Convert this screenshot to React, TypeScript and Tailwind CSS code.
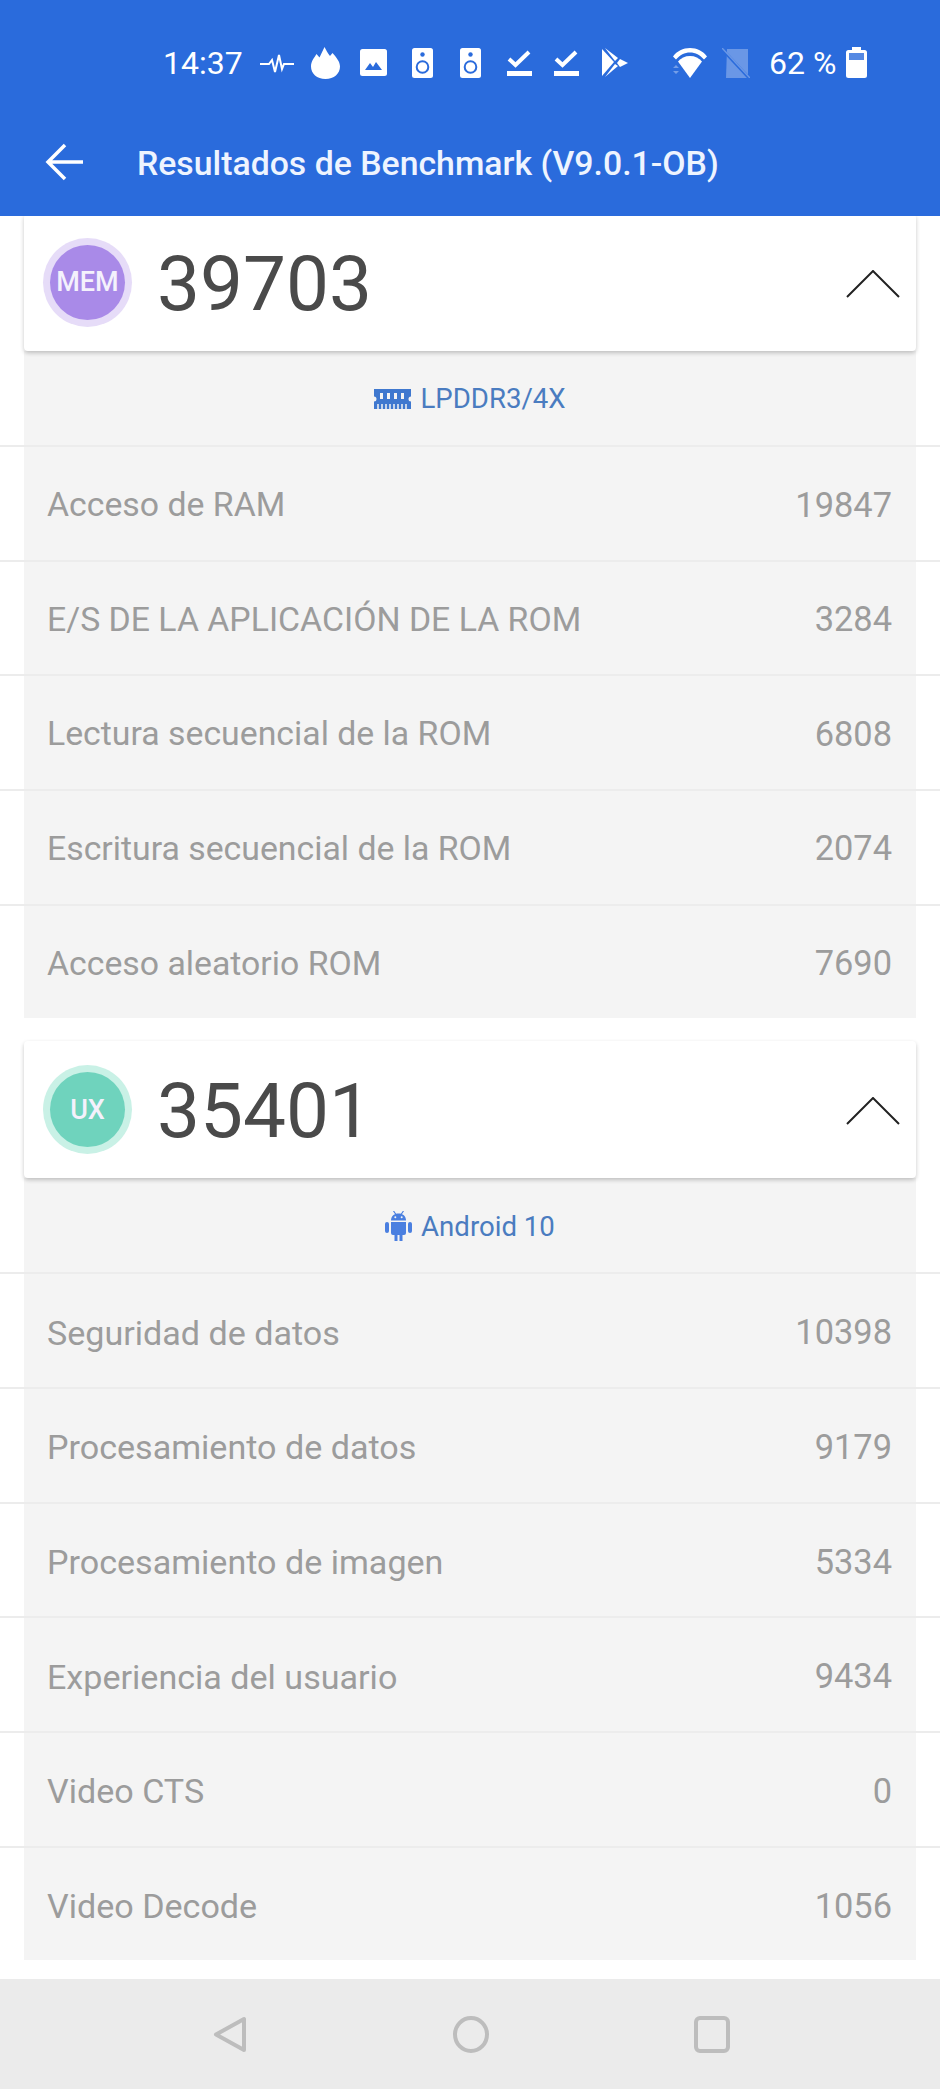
type Row = [string, string];

const memRows: Row[] = [
  ["Acceso de RAM", "19847"],
  ["E/S DE LA APLICACIÓN DE LA ROM", "3284"],
  ["Lectura secuencial de la ROM", "6808"],
  ["Escritura secuencial de la ROM", "2074"],
  ["Acceso aleatorio ROM", "7690"],
];

const uxRows: Row[] = [
  ["Seguridad de datos", "10398"],
  ["Procesamiento de datos", "9179"],
  ["Procesamiento de imagen", "5334"],
  ["Experiencia del usuario", "9434"],
  ["Video CTS", "0"],
  ["Video Decode", "1056"],
];

function Speaker() {
  return (
    <svg width="21" height="30" viewBox="0 0 21 30" className="shrink-0">
      <rect width="21" height="30" rx="2.5" fill="#fff" />
      <circle cx="10.5" cy="6.5" r="2.2" fill="#2a6bdc" />
      <circle cx="10.5" cy="19" r="5.8" fill="none" stroke="#2a6bdc" strokeWidth="2" />
    </svg>
  );
}

function Check() {
  return (
    <svg width="25" height="28" viewBox="0 0 25 28" className="shrink-0">
      <path d="M2 11l6.5 6L22 4" fill="none" stroke="#fff" strokeWidth="4" />
      <rect y="23" width="25" height="5" fill="#fff" />
    </svg>
  );
}

function StatusBar() {
  return (
    <div className="h-[125px] pl-[163px] pt-[48px] flex items-start text-white">
      <span className="w-[80px] h-[30px] flex items-center text-[32px] leading-none shrink-0">14:37</span>
      <svg width="34" height="20" viewBox="0 0 34 20" className="ml-[17px] mt-[6px] shrink-0">
        <path d="M0 10h9l3-4 3 12 4-17 3 14 2-5h10" fill="none" stroke="#fff" strokeWidth="2" />
      </svg>
      <svg width="29" height="32" viewBox="0 0 29 32" className="ml-[17px] -mt-[1px] shrink-0">
        <path d="M14.5 32C6 32 0 26.5 0 19.5 0 14 3.5 10.5 5.5 7l3 3.5C10 7 12 3.5 13.5 0c1.5 3 3.5 6.500 5.500 9l2.500-3c3.500 4 7.500 8.500 7.500 13.500C29 26.500 23 32 14.500 32z" fill="#fff" />
      </svg>
      <svg width="27" height="27" viewBox="0 0 27 27" className="ml-[20px] mt-[1px] shrink-0">
        <rect width="27" height="27" rx="2.500" fill="#fff" />
        <path d="M5 21l5-7 3 4 3-5 6 8z" fill="#2a6bdc" />
      </svg>
      <div className="ml-[25px] shrink-0"><Speaker /></div>
      <div className="ml-[27px] shrink-0"><Speaker /></div>
      <div className="ml-[26px] shrink-0"><Check /></div>
      <div className="ml-[22px] shrink-0"><Check /></div>
      <svg width="26" height="30" viewBox="0 0 26 30" className="ml-[23px] shrink-0">
        <path d="M0 1l12 13L0 28z" fill="#fff" />
        <path d="M3 0l13 10-3 3z" fill="#fff" />
        <path d="M3 29l13-11-3-2z" fill="#fff" />
        <path d="M18 11l8 4-8 4-3-4z" fill="#fff" />
      </svg>
      <svg width="34" height="30" viewBox="0 0 34 30" className="ml-[45px] shrink-0">
        <path d="M0 8.500C4 3 10 0 17 0s13 3 17 8.500l-3 3C27 7 22.500 4.500 17 4.500S7 7 3 11.500z" fill="#fff" />
        <path d="M5 13.500C8 10 12 8 17 8s9 2 12 5.500L17 30z" fill="#fff" />
        <path d="M0 20l3-3 3 3zM0 23h6l-3 3z" fill="#fff" opacity="0.35" />
      </svg>
      <svg width="28" height="30" viewBox="0 0 28 30" className="ml-[15px] shrink-0">
        <path d="M5 1h21v29H4z" fill="#fff" opacity="0.3" />
        <path d="M0 1l27 29" stroke="#2a6bdc" strokeWidth="3" />
        <path d="M0 0l28 30" stroke="#fff" strokeWidth="1.500" opacity="0.3" />
      </svg>
      <span className="ml-[19px] w-[68px] h-[30px] flex items-center text-[32px] leading-none whitespace-nowrap shrink-0">62 %</span>
      <svg width="21" height="31" viewBox="0 0 21 31" className="ml-[9px] -mt-[1px] shrink-0">
        <path d="M6 0h9v3h3.500A2.500 2.500 0 0 1 21 5.500v23a2.500 2.500 0 0 1-2.500 2.500h-16A2.500 2.500 0 0 1 0 28.500v-23A2.500 2.500 0 0 1 2.500 3H6z" fill="#fff" />
        <rect x="3" y="6" width="15" height="7" fill="#2a6bdc" opacity="0.8" />
      </svg>
    </div>
  );
}

function AppBar() {
  return (
    <div className="h-[91px] pl-[45px] flex items-start">
      <svg width="38" height="38" viewBox="0 0 38 38" className="mt-[18px] shrink-0">
        <path d="M38 19H3M20 2L3 19l17 17" fill="none" stroke="#fff" strokeWidth="3.500" />
      </svg>
      <h1 className="ml-[54px] mt-[20px] text-[33.8px] leading-[38px] font-medium text-[#eef4ff] whitespace-nowrap">
        Resultados de Benchmark (V9.0.1-OB)
      </h1>
    </div>
  );
}

function RamIcon() {
  return (
    <svg width="37" height="20" viewBox="0 0 37 20" className="shrink-0">
      <path
        d="M0 0h37v7.500a2.500 2.500 0 0 0 0 5V20H0v-7.500a2.500 2.500 0 0 0 0-5z"
        fill="#3f78cf"
      />
      <path d="M6 4h3v6H6zM13 4h3v6h-3zM20 4h3v6h-3zM27 4h3v6h-3z" fill="#f4f4f4" />
      <path d="M4 15v5M8 15v5M12 15v5M16 15v5M20 15v5M24 15v5M28 15v5M32 15v5" stroke="#f4f4f4" strokeWidth="1.500" />
    </svg>
  );
}

function AndroidIcon() {
  return (
    <svg width="27" height="30" viewBox="0 0 27 30" className="shrink-0">
      <path d="M6 9.500C6 5 9.300 2.500 13.500 2.500S21 5 21 9.500z" fill="#4a7fe0" />
      <path d="M8.500 0l2.500 3.500M18.500 0L16 3.500" stroke="#4a7fe0" strokeWidth="1.200" />
      <circle cx="10.300" cy="6.200" r="1" fill="#f4f4f4" />
      <circle cx="16.700" cy="6.200" r="1" fill="#f4f4f4" />
      <path d="M6 11h15v11a2 2 0 0 1-2 2h-1.500v6h-3v-6h-2v6h-3v-6H8a2 2 0 0 1-2-2z" fill="#4a7fe0" />
      <rect y="11" width="4" height="11" rx="2" fill="#4a7fe0" />
      <rect x="23" y="11" width="4" height="11" rx="2" fill="#4a7fe0" />
    </svg>
  );
}

function Section({
  badge,
  badgeClass,
  ringClass,
  score,
  sub,
  icon,
  rows,
  rowPad,
  labelClass,
  className,
}: {
  badge: string;
  badgeClass: string;
  ringClass: string;
  score: string;
  sub: string;
  icon: React.ReactNode;
  rows: Row[];
  rowPad: string;
  labelClass: string;
  className?: string;
}) {
  return (
    <section className={className}>
      <div className="relative mx-6 h-[137px] pl-[19px] pr-4 flex items-center rounded-[4px] bg-white shadow-[0_2px_4px_rgba(0,0,0,0.22)]">
        <div className={`w-[89px] h-[89px] p-[7px] rounded-full shrink-0 ${ringClass}`}>
          <div className={`w-full h-full rounded-full flex items-center justify-center text-[#f4f1fc] text-[27px] font-medium ${badgeClass}`}>
            {badge}
          </div>
        </div>
        <span className="ml-[25px] mt-[3px] text-[76.5px] leading-none text-[#4a4a4a]">{score}</span>
        <svg width="54" height="28" viewBox="0 0 54 28" className="ml-auto mt-[2px] shrink-0">
          <path d="M1 27L27 1l26 26" fill="none" stroke="#222" strokeWidth="2" />
        </svg>
      </div>
      <div className="mx-6 h-[94px] pt-[2px] flex items-center justify-center gap-[9px] bg-[#f4f4f4] text-[27.6px] text-[#4a7cc0]">
        {icon}
        <span>{sub}</span>
      </div>
      {rows.map(([label, value]) => (
        <div key={label} className="h-[114.67px] border-t-2 border-[#ececec]">
          <div className={`mx-6 h-full pl-[23px] pr-6 flex items-center justify-between bg-[#f4f4f4] text-[#9c9c9c] ${rowPad}`}>
            <span className={labelClass}>{label}</span>
            <span className="text-[34.4px]">{value}</span>
          </div>
        </div>
      ))}
    </section>
  );
}

export default function App() {
  return (
    <main className="w-[940px] h-[2089px] flex flex-col overflow-hidden bg-white font-['Roboto',sans-serif]">
      <header className="relative z-10 h-[216px] bg-[#2a6bdc] shrink-0">
        <StatusBar />
        <AppBar />
      </header>

      <Section
        className="-mt-[2px]"
        badge="MEM"
        ringClass="bg-[#e6dcf8]"
        badgeClass="bg-[#a98ae8]"
        score="39703"
        sub="LPDDR3/4X"
        icon={<RamIcon />}
        rows={memRows}
        rowPad="pt-[4px]"
        labelClass="text-[33.8px]"
      />

      <Section
        className="mt-[23px]"
        badge="UX"
        ringClass="bg-[#c9f1e6]"
        badgeClass="bg-[#6fd3bd]"
        score="35401"
        sub="Android 10"
        icon={<AndroidIcon />}
        rows={uxRows}
        rowPad="pt-[5px]"
        labelClass="text-[34.1px]"
      />

      <nav className="mt-auto h-[110px] pl-[213px] pr-[210px] pt-[37px] flex items-start justify-between bg-[#ebebeb] shrink-0">
        <svg width="34" height="37" viewBox="0 0 34 37">
          <path d="M31 3v31L3 18.500z" fill="none" stroke="#bdbdbd" strokeWidth="4" strokeLinejoin="round" />
        </svg>
        <svg width="36" height="37" viewBox="0 0 36 37">
          <ellipse cx="18" cy="18.500" rx="16" ry="16.500" fill="none" stroke="#bdbdbd" strokeWidth="4" />
        </svg>
        <svg width="36" height="37" viewBox="0 0 36 37">
          <rect x="2" y="2" width="32" height="33" rx="4" fill="none" stroke="#bdbdbd" strokeWidth="4" />
        </svg>
      </nav>
    </main>
  );
}
